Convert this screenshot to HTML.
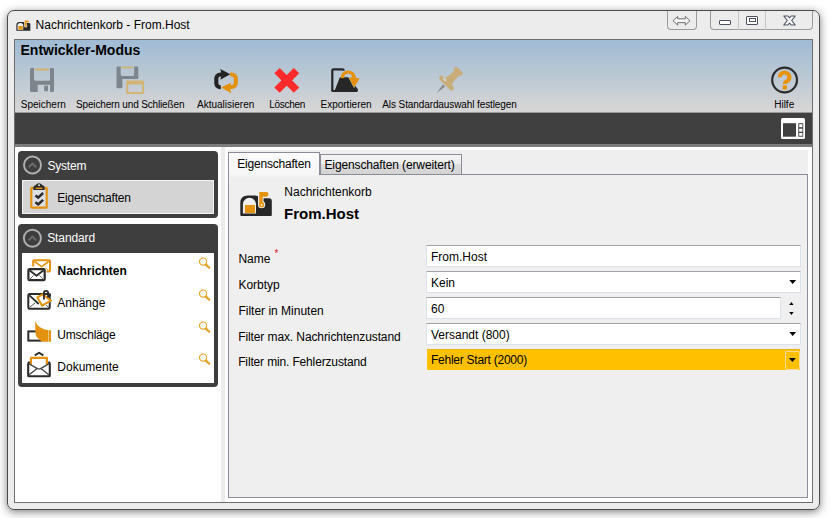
<!DOCTYPE html>
<html><head><meta charset="utf-8">
<style>
*{margin:0;padding:0;box-sizing:border-box}
html,body{width:831px;height:518px;overflow:hidden;background:#fff;font-family:"Liberation Sans",sans-serif;color:#000}
.a{position:absolute}
.t{position:absolute;white-space:nowrap;line-height:1}
svg{position:absolute;overflow:visible}
#shadow{left:7px;top:10px;width:813px;height:500px;border-radius:7px;box-shadow:0 2px 8px 0px rgba(0,0,0,.5)}
#win{left:7px;top:10px;width:813px;height:500px;border:1px solid #4a4a4a;border-radius:7px;background:#ececec}
#frame{left:14px;top:39px;width:799px;height:464px;border:1px solid #6f6f6f;background:#fff}
#ribbon{left:15px;top:40px;width:797px;height:73px;background:linear-gradient(#a0bbd5 0%,#b8c7d4 45%,#d2d3d5 88%,#d6d6d6 98.6%,#9a9a9a 98.7%,#9a9a9a 100%)}
#dark{left:15px;top:113px;width:797px;height:31px;background:#404040}
#strip{left:15px;top:144px;width:797px;height:3px;background:#7c7c7c}
.tb{font-size:10px;top:99.5px}
.inp{left:426px;height:22px;background:#fff;border:1px solid #dde1e8;border-top-color:#a3a3a3}
</style></head><body>
<div id="shadow" class="a"></div>
<div id="win" class="a"></div>
<!-- title bar -->
<svg style="left:0;top:0" width="831" height="40" viewBox="0 0 831 40"><use href="#mbox" transform="translate(16.2,20.4) scale(0.444,0.435)"/></svg>
<div class="t" style="left:35.6px;top:18.6px;font-size:12px;color:#000">Nachrichtenkorb - From.Host</div>

<!-- caption buttons -->
<div class="a" style="left:667px;top:11px;width:30px;height:19px;border:1px solid #9a9a9a;border-top:none;border-radius:0 0 4px 4px;background:#ececec"></div>
<svg style="left:672px;top:14.5px" width="19" height="11.5" viewBox="0 0 20 12">
  <path d="M1 6 L6 1.5 V4 H14 V1.5 L19 6 L14 10.5 V8 H6 V10.5 Z" fill="#f8f8f8" stroke="#5a5a5a" stroke-width="0.9" stroke-linejoin="round"/>
</svg>
<div class="a" style="left:710px;top:11px;width:103px;height:19px;border:1px solid #9a9a9a;border-top:none;border-radius:0 0 4px 4px;background:#ececec"></div>
<div class="a" style="left:738px;top:11px;width:1px;height:19px;background:#c4c4c4"></div>
<div class="a" style="left:765px;top:11px;width:1px;height:19px;background:#c4c4c4"></div>
<div class="a" style="left:719px;top:19.5px;width:12px;height:5px;border:1px solid #4b5060;background:#fff;border-radius:1px"></div>
<div class="a" style="left:746px;top:15.5px;width:12px;height:9px;border:1px solid #4b5060;background:#fff;border-radius:1px"></div>
<div class="a" style="left:748.5px;top:18px;width:7px;height:4px;border:1px solid #4b5060"></div>
<svg style="left:783px;top:15px" width="13" height="11" viewBox="0 0 13 11">
  <path d="M0.8,1 H4.9 L6.5,2.9 L8.1,1 H12.2 L8.7,5.5 L12.2,10 H8.1 L6.5,8.1 L4.9,10 H0.8 L4.3,5.5 Z" fill="#fafafa" stroke="#4b5060" stroke-width="1.1" stroke-linejoin="round"/>
</svg>

<div id="frame" class="a"></div>
<div id="ribbon" class="a"></div>
<div id="dark" class="a"></div>
<div id="strip" class="a"></div>

<div class="t" style="left:20.5px;top:43px;font-size:14px;font-weight:bold">Entwickler-Modus</div>

<!-- toolbar labels -->
<div class="t tb" style="left:20.8px">Speichern</div>
<div class="t tb" style="left:76px;letter-spacing:-0.15px">Speichern und Schließen</div>
<div class="t tb" style="left:197px">Aktualisieren</div>
<div class="t tb" style="left:269.2px;letter-spacing:-0.28px">Löschen</div>
<div class="t tb" style="left:320.5px">Exportieren</div>
<div class="t tb" style="left:382.3px;letter-spacing:-0.1px">Als Standardauswahl festlegen</div>
<div class="t tb" style="left:774.2px">Hilfe</div>


<svg style="left:0;top:0" width="831" height="518" viewBox="0 0 831 518">
 <!-- save -->
 <g transform="translate(30,68)" fill="#7d848b">
  <path fill-rule="evenodd" d="M1.5,0 H22.5 Q24,0 24,1.5 V22.5 Q24,24 22.5,24 H1.5 Q0,24 0,22.5 V1.5 Q0,0 1.5,0 Z M4,0 H20 V11.2 Q20,12.7 18.5,12.7 H5.5 Q4,12.7 4,11.2 Z M7.7,16.7 H20.1 V24 H7.7 Z"/>
  <rect x="14.2" y="17.6" width="3.8" height="5.6"/>
  <rect x="5" y="0.4" width="14" height="2.1" fill="#d2b272"/>
 </g>
 <!-- save & close -->
 <g transform="translate(116,66)">
  <path fill="#7d848b" fill-rule="evenodd" d="M1.5,0.5 H21 Q22.3,0.5 22.3,1.8 V13 H6.4 V21 Q6.4,22.3 5,22.3 H1.8 Q0.5,22.3 0.5,21 V1.8 Q0.5,0.5 1.8,0.5 Z M4.7,0.5 H18.2 V8.6 Q18.2,9.9 16.9,9.9 H6 Q4.7,9.9 4.7,8.6 Z"/>
  <rect x="5.7" y="0.5" width="11.1" height="1.9" fill="#d2b272"/>
  <path fill="#d4b475" fill-rule="evenodd" d="M11.2,14.4 H27.1 Q28.1,14.4 28.1,15.4 V27.1 Q28.1,28.1 27.1,28.1 H11.2 Q10.2,28.1 10.2,27.1 V15.4 Q10.2,14.4 11.2,14.4 Z M12.3,18.6 H26.2 V26 H12.3 Z"/>
 </g>
 <!-- refresh -->
 <g transform="translate(208,63)">
  <path d="M12.8,24.3 H12.3 A4 4 0 0 1 8.3,20.3 V15.5 A4 4 0 0 1 12.3,11.5 H14.5" fill="none" stroke="#232323" stroke-width="4.1"/>
  <path d="M12.3,5.9 L22.3,11.2 L12.3,16.7 L13.6,11.2 Z" fill="#232323"/>
  <path d="M22.1,11.45 H23.8 A4 4 0 0 1 27.8,15.45 V20 A4 4 0 0 1 23.8,24 H21" fill="none" stroke="#e4920b" stroke-width="4.1"/>
  <path d="M23.2,19.4 L13.2,24.6 L23.2,30.2 L21.9,24.6 Z" fill="#e4920b"/>
 </g>
 <!-- delete -->
 <g transform="translate(286.75,80.4)" fill="#ff2a2a">
  <rect x="-13.8" y="-3.8" width="27.6" height="7.6" transform="rotate(45)"/>
  <rect x="-13.8" y="-3.8" width="27.6" height="7.6" transform="rotate(-45)"/>
 </g>

 <!-- export -->
 <path d="M332.3,91 V70.4 Q332.3,69.3 333.4,69.3 H342.4 Q343.6,69.3 344,70.6" fill="none" stroke="#262626" stroke-width="2.2"/>
 <path d="M339.8,77.3 H348.4 L357.9,89.2 V90.4 Q357.9,92 356.3,92 H332.6 Q331.2,92 331.2,90.6 V89.9 H334.9 Z" fill="#262626"/>
 <path d="M342.4,78.2 A5.8 5.8 0 0 1 354,77.6" fill="none" stroke="#e4920b" stroke-width="3.4"/>
 <path d="M348.9,77.4 L359.7,78.2 L354.1,87.4 Z" fill="#e4920b" stroke="#bdcad6" stroke-width="0.9" stroke-linejoin="round" paint-order="stroke"/>
 <path d="M349.6,77.8 L359,78.5 L354.1,86.6 Z" fill="#e4920b"/>
 <path d="M352.3,76 A5.8 5.8 0 0 1 354,77.6 V79" fill="none" stroke="#e4920b" stroke-width="3.4"/>
 <!-- pin -->
 <g transform="translate(436.6,92.9) rotate(45)" fill="#c9ad78">
  <path d="M-1.5,-10.5 L1.5,-10.5 L0,0 Z" fill="#85898d"/>
  <rect x="-9.4" y="-16.2" width="19" height="4.6" rx="2.3"/>
  <path d="M-6,-14 Q-3,-18 -3.3,-28.5 H3.7 Q3.4,-18 6.4,-14 Z"/>
  <rect x="-5.3" y="-32.8" width="10.8" height="4.6" rx="2.2"/>
  <ellipse cx="-3.6" cy="-15.2" rx="1.9" ry="1.2" fill="#cfd7de"/>
 </g>
 <!-- help -->
 <circle cx="784.6" cy="80" r="12.4" fill="none" stroke="#2b2b2b" stroke-width="2.2"/>
 <path d="M779.8,77.2 A4.8 4.6 0 1 1 787.6,80.8 Q784.8,82.3 784.8,84" fill="none" stroke="#e8940a" stroke-width="4"/>
 <rect x="782.6" y="85.2" width="4.4" height="4.3" rx="0.8" fill="#e8940a"/>
 <!-- dark bar icon -->
 <rect x="781" y="118" width="24" height="21" rx="1.5" fill="#fff"/>
 <rect x="783" y="123.2" width="13" height="13.5" fill="#404040"/>
 <rect x="798.3" y="123.2" width="4.9" height="13.5" fill="#404040"/>
 <rect x="799.2" y="124.2" width="3.2" height="3" fill="#fff"/>
 <rect x="799.2" y="128.7" width="3.2" height="3" fill="#fff"/>
 <rect x="799.2" y="133" width="3.2" height="2.8" fill="#fff"/>
</svg>

<!-- left panel -->
<div class="a" style="left:221px;top:147px;width:4px;height:355px;background:#ececec"></div>
<div class="a" style="left:18px;top:151px;width:200px;height:66.5px;border-radius:4px;background:#3e3e3e"></div>
<div class="a" style="left:21.5px;top:180px;width:192px;height:34px;border:1px solid #f4f4f4;background:#d4d4d4"></div>
<div class="t" style="left:47.4px;top:159.8px;font-size:12px;color:#fff;letter-spacing:-0.2px">System</div>
<div class="t" style="left:57.3px;top:191.7px;font-size:12px;color:#000;letter-spacing:-0.2px">Eigenschaften</div>
<div class="a" style="left:18px;top:224px;width:200px;height:162.5px;border-radius:4px;background:#3e3e3e"></div>
<div class="a" style="left:22px;top:253px;width:192px;height:130px;background:#fff"></div>
<div class="t" style="left:47.2px;top:232.3px;font-size:12px;color:#fff;letter-spacing:-0.1px">Standard</div>
<div class="t" style="left:57.5px;top:265.2px;font-size:12px;font-weight:bold">Nachrichten</div>
<div class="t" style="left:57.3px;top:296.9px;font-size:12px">Anhänge</div>
<div class="t" style="left:57.3px;top:328.7px;font-size:12px;letter-spacing:-0.2px">Umschläge</div>
<div class="t" style="left:57.3px;top:360.8px;font-size:12px">Dokumente</div>
<svg style="left:0;top:0" width="831" height="518" viewBox="0 0 831 518">
 <!-- collapse circles -->
 <circle cx="32.5" cy="165" r="8.5" fill="none" stroke="#b0b0b0" stroke-width="1.9"/>
 <path d="M28.8,167.2 L32.5,163.5 L36.2,167.2" fill="none" stroke="#6a6a6a" stroke-width="2"/>
 <circle cx="32.4" cy="238.2" r="8.5" fill="none" stroke="#b0b0b0" stroke-width="1.9"/>
 <path d="M28.7,240.4 L32.4,236.7 L36.1,240.4" fill="none" stroke="#6a6a6a" stroke-width="2"/>
 <!-- clipboard -->
 <path d="M33.5,187.8 H31.5 Q31.3,187.8 31.3,188.3 V207.1 Q31.3,207.6 31.8,207.6 H46.2 Q46.7,207.6 46.7,207.1 V188.3 Q46.7,187.8 46.2,187.8 H44.5" fill="#dcdfe3" stroke="#e3930f" stroke-width="2.2"/>
 <path d="M33.3,190 V187.5 Q33.3,185.5 35.5,185.3 Q37,183.2 39,183.2 Q41,183.2 42.5,185.3 Q44.7,185.5 44.7,187.5 V190 Z" fill="#2a2a2a"/>
 <rect x="35.6" y="187.6" width="6.9" height="1.4" fill="#e3930f"/>
 <circle cx="39" cy="185.2" r="0.9" fill="#fff"/>
 <path d="M35.4,195.4 L38.2,197.6 L43.1,193" fill="none" stroke="#2a2a2a" stroke-width="2.5"/>
 <path d="M35.4,202.2 L38.2,204.4 L43.1,199.8" fill="none" stroke="#2a2a2a" stroke-width="2.5"/>
 <!-- nachrichten -->
 <g fill="none" stroke-linejoin="round">
  <path d="M33.2,266.5 V261 Q33.2,260.3 34,260.3 H49.2 Q50,260.3 50,261 V270.8 Q50,271.5 49.2,271.5 H46.5" stroke="#e3930f" stroke-width="2"/>
  <path d="M34.5,261.5 L41.6,266.6 L48.7,261.5" stroke="#e3930f" stroke-width="1.6"/>
  <path d="M45.5,268 L48.5,270.5" stroke="#e3930f" stroke-width="1"/>
  <rect x="28.4" y="269.2" width="16.3" height="10.9" rx="1.2" fill="#fff" stroke="#2b2b2b" stroke-width="2.2"/>
  <path d="M29.5,270.3 L36.5,275.8 L43.6,270.3" stroke="#2b2b2b" stroke-width="1.8"/>
  <path d="M29.5,279.5 L33.5,275.5 M43.6,279.5 L39.6,275.5" stroke="#666" stroke-width="1"/>
 </g>
 <!-- anhaenge -->
 <g fill="none" stroke-linejoin="round">
  <rect x="28.3" y="294.1" width="21.4" height="14.7" rx="1.2" fill="#fff" stroke="#2b2b2b" stroke-width="2"/>
  <path d="M29.4,295.3 L38.7,304" stroke="#2b2b2b" stroke-width="1.8"/>
  <path d="M29.4,307.6 L35,303 M46.1,305.2 L49.2,307.9" stroke="#555" stroke-width="1"/>
  <path d="M37.3,297.3 L42.6,294.3 L51,300.6 L42,305.6 Z" fill="#fff" stroke="#e3930f" stroke-width="2"/>
  <path d="M43.9,299.6 V293 Q43.9,290.9 46,290.9 Q48.1,290.9 48.1,293 V297.6" stroke="#2b2b2b" stroke-width="1.9"/>
  <path d="M50.3,293.4 V296.3" stroke="#2b2b2b" stroke-width="1.2"/>
 </g>
 <!-- umschlaege -->
 <rect x="28.3" y="331.4" width="12.5" height="9.2" fill="none" stroke="#2b2b2b" stroke-width="2"/>
 <path d="M35.3,321.1 Q38.5,329.5 48.4,330.2 H51 V341.8 H42.5 Q35.3,338 35.3,332 Z" fill="#e3930f"/>
 <rect x="48" y="330.2" width="0.9" height="11.6" fill="#f1c88a"/>
 <!-- dokumente -->
 <g fill="none" stroke-linejoin="round">
  <path d="M30.9,364.5 V357.9 H46.9 V364.5" stroke="#e3930f" stroke-width="2.2"/>
  <path d="M34.8,355.4 L39.1,352.7 L43.3,355.4" stroke="#2b2b2b" stroke-width="1.9"/>
  <path d="M29.6,361.8 Q28.2,362.6 28.2,364 V375.4 Q28.2,376.2 29,376.2 H49 Q49.8,376.2 49.8,375.4 V364 Q49.8,362.6 48.4,361.8" stroke="#2b2b2b" stroke-width="2.1"/>
  <path d="M28.8,363.6 L37.4,368.6 Q39,369.3 40.6,368.6 L49.2,363.6" stroke="#444" stroke-width="1.3"/>
  <path d="M28.8,375 L37.1,368.4 M49.2,375 L40.9,368.4" stroke="#444" stroke-width="1.3"/>
 </g>
 <!-- magnifiers -->
 <g id="mag" fill="none" stroke="#e8a020">
  <circle cx="203.1" cy="261.6" r="3.6" stroke-width="1.1"/>
  <path d="M205.9,264.6 L209.2,267.8" stroke-width="2.2" stroke-linecap="round"/>
 </g>
 <use href="#mag" y="32"/>
 <use href="#mag" y="64"/>
 <use href="#mag" y="96"/>
</svg>

<!-- content -->
<div class="a" style="left:228px;top:150px;width:580px;height:348px;background:#efefef"></div>
<div class="a" style="left:228px;top:174px;width:580px;height:324px;border:1px solid #8a8d97"></div>
<div class="a" style="left:319.5px;top:154px;width:142.5px;height:21px;border:1px solid #8a8d97;background:linear-gradient(#f4f4f4 0,#ededed 45%,#dddddd 50%,#d3d3d3 100%)"></div>
<div class="a" style="left:228px;top:152px;width:92px;height:23px;border:1px solid #8a8d97;border-bottom:none;background:linear-gradient(#fbfbfb,#f6f6f6)"></div>
<div class="a" style="left:229px;top:175px;width:90px;height:3px;background:linear-gradient(#f4f4f4,#efefef)"></div>
<div class="t" style="left:237.2px;top:157.6px;font-size:12px;letter-spacing:-0.2px">Eigenschaften</div>
<div class="t" style="left:324.5px;top:159.2px;font-size:12px;letter-spacing:-0.13px">Eigenschaften (erweitert)</div>

<div class="t" style="left:284.3px;top:186.4px;font-size:12px">Nachrichtenkorb</div>
<div class="t" style="left:284px;top:206.2px;font-size:15px;font-weight:bold">From.Host</div>

<div class="t" style="left:238.4px;top:253.1px;font-size:12px">Name</div>
<div class="t" style="left:274.5px;top:248.5px;font-size:10px;color:#e02020">*</div>
<div class="t" style="left:238.4px;top:279.1px;font-size:12px">Korbtyp</div>
<div class="t" style="left:238.4px;top:304.9px;font-size:12px">Filter in Minuten</div>
<div class="t" style="left:238.2px;top:330.6px;font-size:12px;letter-spacing:-0.1px">Filter max. Nachrichtenzustand</div>
<div class="t" style="left:238.2px;top:356.4px;font-size:12px;letter-spacing:-0.15px">Filter min. Fehlerzustand</div>

<div class="a inp" style="top:245px;width:375px"></div>
<div class="a inp" style="top:271px;width:375px"></div>
<div class="a inp" style="top:297px;width:355px"></div>
<div class="a inp" style="top:323px;width:375px"></div>
<div class="a" style="left:427px;top:349px;width:373px;height:21px;background:#ffc000;border-top:1px solid #e8b410"></div>
<div class="a" style="left:785px;top:350.5px;width:14.5px;height:19px;border:1px solid #f6dc96;border-radius:2px;background:#ffc000"></div>

<div class="t" style="left:431px;top:250.8px;font-size:12px">From.Host</div>
<div class="t" style="left:431px;top:276.8px;font-size:12px">Kein</div>
<div class="t" style="left:431px;top:302.7px;font-size:12px">60</div>
<div class="t" style="left:431px;top:328.6px;font-size:12px">Versandt (800)</div>
<div class="t" style="left:431px;top:354.4px;font-size:12px;letter-spacing:-0.25px">Fehler Start (2000)</div>

<svg style="left:0;top:0" width="831" height="518" viewBox="0 0 831 518">
 <!-- mailbox -->
 <g transform="translate(240,192)"><g id="mbox">
  <path d="M0.3,23 V11 Q0.3,3.5 7.8,3.5 H15.5 Q18.5,3.5 19.5,6.2 H29 Q31.8,6.2 31.8,9 V23 Q31.8,23.9 30.9,23.9 H1.2 Q0.3,23.9 0.3,23 Z" fill="#262626"/>
  <path d="M2.9,21.6 V12.3 A6.55 6.55 0 0 1 16,12.3 V21.6 Z" fill="#efefef"/>
  <rect x="4.9" y="13" width="10.1" height="8" fill="#e3930f"/>
  <path d="M20.8,-0.5 V12.8" stroke="#efefef" stroke-width="5.5"/>
  <circle cx="21.6" cy="12.7" r="3.6" fill="#efefef"/>
  <path d="M19.3,0.1 H26.2 Q28.5,0.1 28.5,2.45 Q28.5,4.8 26.2,4.8 H22.6 V12 H19.3 Z" fill="#e3930f"/>
  <circle cx="21.6" cy="12.7" r="2.6" fill="#e3930f"/>
  <circle cx="21.6" cy="12.9" r="0.9" fill="#fff"/>
 </g></g>
 <!-- dropdown arrows -->
 <g fill="#000">
  <path d="M789.3,280 H796.1 L792.7,284 Z"/>
  <path d="M789.3,332 H796.1 L792.7,336 Z"/>
  <path d="M789,358 H795.8 L792.4,362 Z"/>
  <path d="M789.2,305 H793.6 L791.4,302 Z"/>
  <path d="M789.2,312 H793.6 L791.4,315 Z"/>
 </g>
</svg>
</body></html>
